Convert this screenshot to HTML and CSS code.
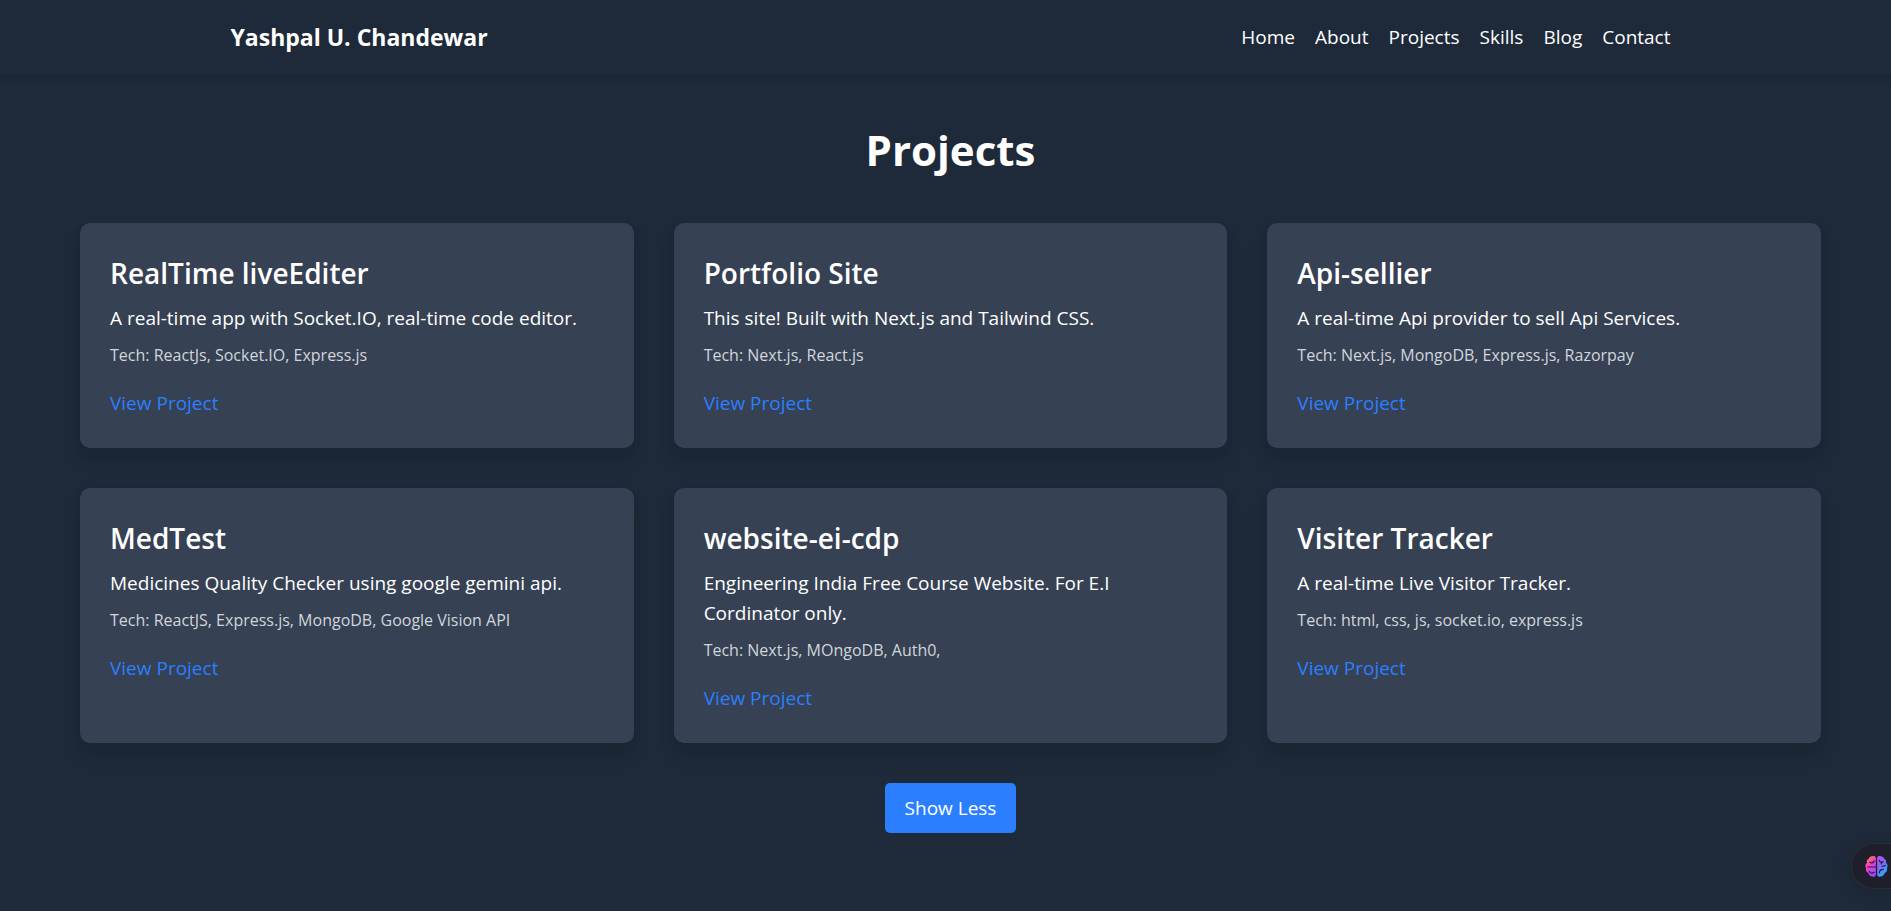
FILE: index.html
```html
<!DOCTYPE html>
<html lang="en">
<head>
<meta charset="utf-8">
<meta name="viewport" content="width=device-width, initial-scale=1">
<title>Yashpal U. Chandewar - Projects</title>
<link rel="stylesheet" href="styles.css">
</head>
<body>
<header class="site-header">
  <div class="header-inner">
    <a class="brand" href="#">Yashpal U. Chandewar</a>
    <nav class="nav" aria-label="Main">
      <a href="#">Home</a>
      <a href="#">About</a>
      <a href="#projects">Projects</a>
      <a href="#">Skills</a>
      <a href="#">Blog</a>
      <a href="#">Contact</a>
    </nav>
  </div>
</header>
<main class="projects" id="projects">
  <h1 class="page-title">Projects</h1>
  <div class="grid">
    <article class="card">
      <h2 class="card-title">RealTime liveEditer</h2>
      <p class="card-text">A real-time app with Socket.IO, real-time code editor.</p>
      <p class="card-tech">Tech: ReactJs, Socket.IO, Express.js</p>
      <a class="card-link" href="#">View Project</a>
    </article>
    <article class="card">
      <h2 class="card-title">Portfolio Site</h2>
      <p class="card-text">This site! Built with Next.js and Tailwind CSS.</p>
      <p class="card-tech">Tech: Next.js, React.js</p>
      <a class="card-link" href="#">View Project</a>
    </article>
    <article class="card">
      <h2 class="card-title">Api-sellier</h2>
      <p class="card-text">A real-time Api provider to sell Api Services.</p>
      <p class="card-tech">Tech: Next.js, MongoDB, Express.js, Razorpay</p>
      <a class="card-link" href="#">View Project</a>
    </article>
    <article class="card">
      <h2 class="card-title">MedTest</h2>
      <p class="card-text">Medicines Quality Checker using google gemini api.</p>
      <p class="card-tech">Tech: ReactJS, Express.js, MongoDB, Google Vision API</p>
      <a class="card-link" href="#">View Project</a>
    </article>
    <article class="card">
      <h2 class="card-title">website-ei-cdp</h2>
      <p class="card-text">Engineering India Free Course Website. For E.I Cordinator only.</p>
      <p class="card-tech">Tech: Next.js, MOngoDB, Auth0,</p>
      <a class="card-link" href="#">View Project</a>
    </article>
    <article class="card">
      <h2 class="card-title">Visiter Tracker</h2>
      <p class="card-text">A real-time Live Visitor Tracker.</p>
      <p class="card-tech">Tech: html, css, js, socket.io, express.js</p>
      <a class="card-link" href="#">View Project</a>
    </article>
  </div>
  <button class="toggle" type="button">Show Less</button>
</main>
<button class="assistant" type="button" aria-label="Open assistant">
  <svg class="brain" viewBox="0 0 24 24" aria-hidden="true">
    <defs>
      <linearGradient id="left" x1="0" y1="0" x2="0.5" y2="1">
        <stop offset="0" stop-color="#ff9a2e"/>
        <stop offset="0.15" stop-color="#ff8a3c"/>
        <stop offset="0.45" stop-color="#f63fc0"/>
        <stop offset="1" stop-color="#a14bff"/>
      </linearGradient>
      <linearGradient id="right" x1="0" y1="0" x2="0.6" y2="1">
        <stop offset="0" stop-color="#c44bf5"/>
        <stop offset="0.5" stop-color="#8168ff"/>
        <stop offset="1" stop-color="#1fb0ff"/>
      </linearGradient>
    </defs>
    <path fill="url(#left)" d="M11.300 3C11.300 1.500 9.500 .8 8 1.200 6 1 4.300 2.200 4 4 2.200 4.600 1.400 6.500 2.200 8.200.3 9.500 0 12 1.100 13.800.5 16 1.600 18 3.500 18.800 4 21 6 22.600 8 22.400c1.700.8 3.300-.3 3.300-2z"/>
    <path fill="url(#right)" d="M12.700 3c0-1.500 1.800-2.200 3.300-1.800 2-.2 3.700 1 4 2.800 1.800.6 2.600 2.500 1.800 4.200 1.900 1.300 2.200 3.800 1.100 5.600.6 2.200-.5 4.200-2.400 5-.5 2.200-2.500 3.800-4.500 3.600-1.700.8-3.300-.3-3.300-2z"/>
    <g fill="none" stroke="#1f1b2e" stroke-width="1.200" stroke-linecap="round">
      <path d="M5 7.500c2.500 1.500 4 .3 4.500-1.500M3 12.500h8M4.500 17c1 2.500 3.500 2.500 5 1"/>
      <path d="M15 5.500c.5 2 2 2.500 4 1.500M17 7.300v2M15 18.500c.2-2 1-3.500 4-3.500M18 12l3.500-1"/>
    </g>
  </svg>
</button>
</body>
</html>
```
FILE: styles.css
```css
*,
*::before,
*::after {
  box-sizing: border-box;
}

body {
  margin: 0;
  min-height: 100vh;
  background: #1e2939;
  color: #fff;
  font-family: "Segoe UI", "Open Sans", "Noto Sans", sans-serif;
  font-size: 19px;
  line-height: 30px;
}

a {
  color: inherit;
  text-decoration: none;
}

.site-header {
  position: relative;
  padding: 20px 0 20px 10px;
  box-shadow: 0 5px 8px rgba(0, 0, 0, 0.08);
}

.header-inner {
  display: flex;
  align-items: center;
  justify-content: space-between;
  max-width: 1440px;
  margin: 0 auto;
  line-height: 34px;
}

.brand {
  font-size: 23px;
  font-weight: 700;
}

.nav {
  display: flex;
  gap: 20px;
}

.projects {
  display: flex;
  flex-direction: column;
  align-items: center;
  padding: 50px 70px 60px 80px;
}

.page-title {
  margin: 0 0 48px;
  font-size: 42px;
  font-weight: 700;
  line-height: 51px;
}

.grid {
  display: grid;
  grid-template-columns: repeat(3, 1fr);
  gap: 40px;
  width: 100%;
}

.card {
  padding: 30px;
  border-radius: 10px;
  background: #364153;
  box-shadow: 0 12px 18px rgba(0, 0, 0, 0.08), 0 5px 8px rgba(0, 0, 0, 0.06);
}

.card-title {
  margin: 0 0 10px;
  font-size: 28px;
  font-weight: 600;
  line-height: 40px;
}

.card-text {
  margin: 0 0 10px;
}

.card-tech {
  margin: 0 0 20px;
  color: #d1d5dc;
  font-size: 16px;
  line-height: 25px;
}

.card-link {
  display: inline-block;
  color: #2b7fff;
  vertical-align: top;
}

.toggle {
  margin-top: 40px;
  padding: 10px 20px;
  border: 0;
  border-radius: 5px;
  background: #2b7fff;
  color: #fff;
  font: inherit;
}

.assistant {
  position: fixed;
  right: 0;
  bottom: 22px;
  display: flex;
  align-items: center;
  width: 40px;
  height: 46px;
  padding: 0 0 0 13px;
  border: 1px solid #2b2d3c;
  border-right: 0;
  border-radius: 23px 0 0 23px;
  background: #1f1e2b;
  box-shadow: 0 4px 16px rgba(0, 0, 0, 0.1);
}

.brain {
  flex: none;
  width: 23px;
  height: 23px;
}
```
